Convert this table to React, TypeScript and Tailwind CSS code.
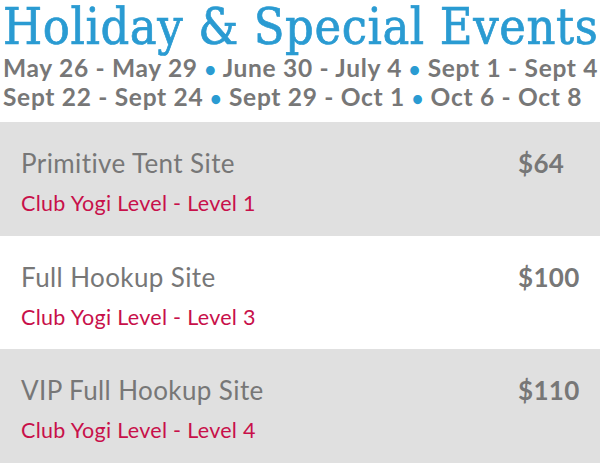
import React from "react";

const rows = [
  { name: "Primitive Tent Site", level: "Club Yogi Level - Level 1", price: "$64", gray: true },
  { name: "Full Hookup Site", level: "Club Yogi Level - Level 3", price: "$100", gray: false },
  { name: "VIP Full Hookup Site", level: "Club Yogi Level - Level 4", price: "$110", gray: true },
];

function Dot() {
  return <span className="text-[#2a9bd2] text-[20px] leading-none">•</span>;
}

export default function App() {
  return (
    <div className="w-[600px] h-[463px] bg-white overflow-hidden" style={{ fontFamily: "Lato, 'Open Sans', sans-serif" }}>
      <div className="pl-[3px] pt-[2px]">
        <h1
          className="text-[50px] leading-[51px] tracking-[0.6px] text-[#2a9bd2] whitespace-nowrap [-webkit-text-stroke:0.7px_#2a9bd2]"
          style={{ fontFamily: "'DejaVu Serif Condensed', 'DejaVu Serif', serif" }}
        >
          Holiday &amp; Special Events
        </h1>
        <div className="text-[24.5px] leading-[29px] tracking-[0.7px] font-bold text-[#777777] whitespace-nowrap">
          <div className="h-[29px]">
            May 26 - May 29 <Dot /> June 30 - July 4 <Dot /> Sept 1 - Sept 4
          </div>
          <div className="h-[29px]">
            Sept 22 - Sept 24 <Dot /> Sept 29 - Oct 1 <Dot /> Oct 6 - Oct 8
          </div>
        </div>
      </div>
      <div className="mt-[11px]">
        {rows.map((r) => (
          <div
            key={r.name}
            className={`h-[113.5px] flex pl-[21px] pt-[25px] ${r.gray ? "bg-[#e0e0e0]" : "bg-white"}`}
          >
            <div className="flex-1">
              <div className="text-[26px] leading-[32px] tracking-[0.4px] text-[#777777]">{r.name}</div>
              <div className="text-[21.5px] leading-[26px] tracking-[0.3px] mt-[11px] text-[#c8104a]">{r.level}</div>
            </div>
            <div className="w-[82px] text-[26px] leading-[32px] font-bold tracking-[0.3px] text-[#777777]">{r.price}</div>
          </div>
        ))}
      </div>
    </div>
  );
}
